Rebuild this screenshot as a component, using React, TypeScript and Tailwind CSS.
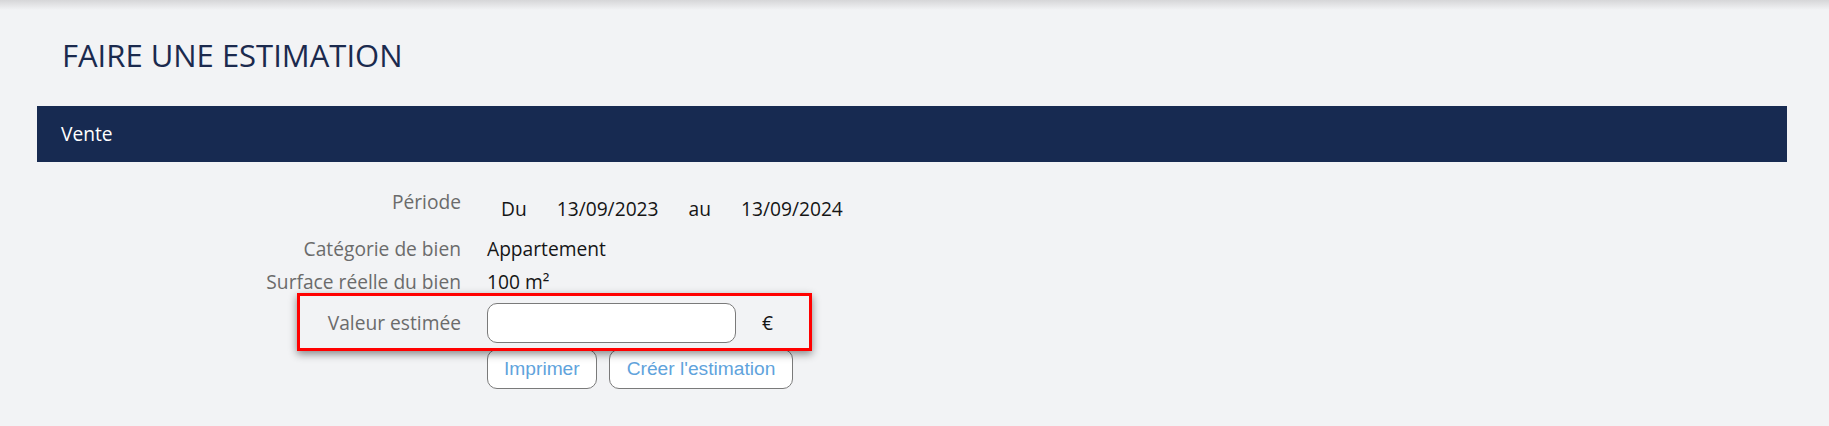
import React from "react";

export default function App() {
  return (
    <div className="min-h-[426px] bg-[#f2f3f5] font-['Open_Sans',sans-serif]">
      <div className="h-[10px] bg-gradient-to-b from-[#d6d6d8] to-[#f2f3f5]" />
      <div className="pl-[37px] pr-[42px]">
        <h1 className="mt-[24px] pl-[25px] text-[31px] leading-[42px] font-normal text-[#1b2a4e]">
          FAIRE UNE ESTIMATION
        </h1>
        <div className="mt-[30px] flex h-[56px] items-center bg-[#172a51] pl-[24px] text-[19.2px] leading-[28.8px] text-white">
          Vente
        </div>
        <div className="pt-[26px] text-[19.2px] leading-[28.8px] text-[#151515]">
          <div className="flex h-[47px] items-start gap-[26px]">
            <div className="w-[424px] text-right text-[#6b6b6b]">Période</div>
            <div className="-ml-[1px] flex pt-[7px]">
              <span className="px-[15px]">Du</span>
              <span className="px-[15px]">13/09/2023</span>
              <span className="px-[15px]">au</span>
              <span className="px-[15px]">13/09/2024</span>
            </div>
          </div>
          <div className="flex h-[33px] items-start gap-[26px]">
            <div className="w-[424px] text-right text-[#6b6b6b]">Catégorie de bien</div>
            <div>Appartement</div>
          </div>
          <div className="flex h-[29px] items-start gap-[26px]">
            <div className="w-[424px] text-right text-[#6b6b6b]">Surface réelle du bien</div>
            <div>100 m²</div>
          </div>
          <div className="relative flex items-center gap-[26px] py-[6px]">
            <div className="w-[424px] text-right text-[#6b6b6b]">Valeur estimée</div>
            <input
              type="text"
              className="h-[40px] w-[249px] rounded-[10px] border border-[#7a7a7a] bg-white px-2 outline-none"
            />
            <span>€</span>
            <div className="pointer-events-none absolute left-[260px] top-[-4px] z-10 h-[58px] w-[515px] border-[3px] border-[#ff0000] shadow-[0_3px_8px_rgba(0,0,0,0.45)]" />
          </div>
          <div className="flex gap-3 pl-[450px]">
            <button className="h-[40px] rounded-[10px] border border-[#7a7a7a] bg-white px-[16px] font-['Liberation_Sans',Arial,sans-serif] text-[19.2px] text-[#5fa3dc]">
              Imprimer
            </button>
            <button className="h-[40px] rounded-[10px] border border-[#7a7a7a] bg-white px-[17px] font-['Liberation_Sans',Arial,sans-serif] text-[19.2px] text-[#5fa3dc]">
              Créer l'estimation
            </button>
          </div>
        </div>
      </div>
    </div>
  );
}
